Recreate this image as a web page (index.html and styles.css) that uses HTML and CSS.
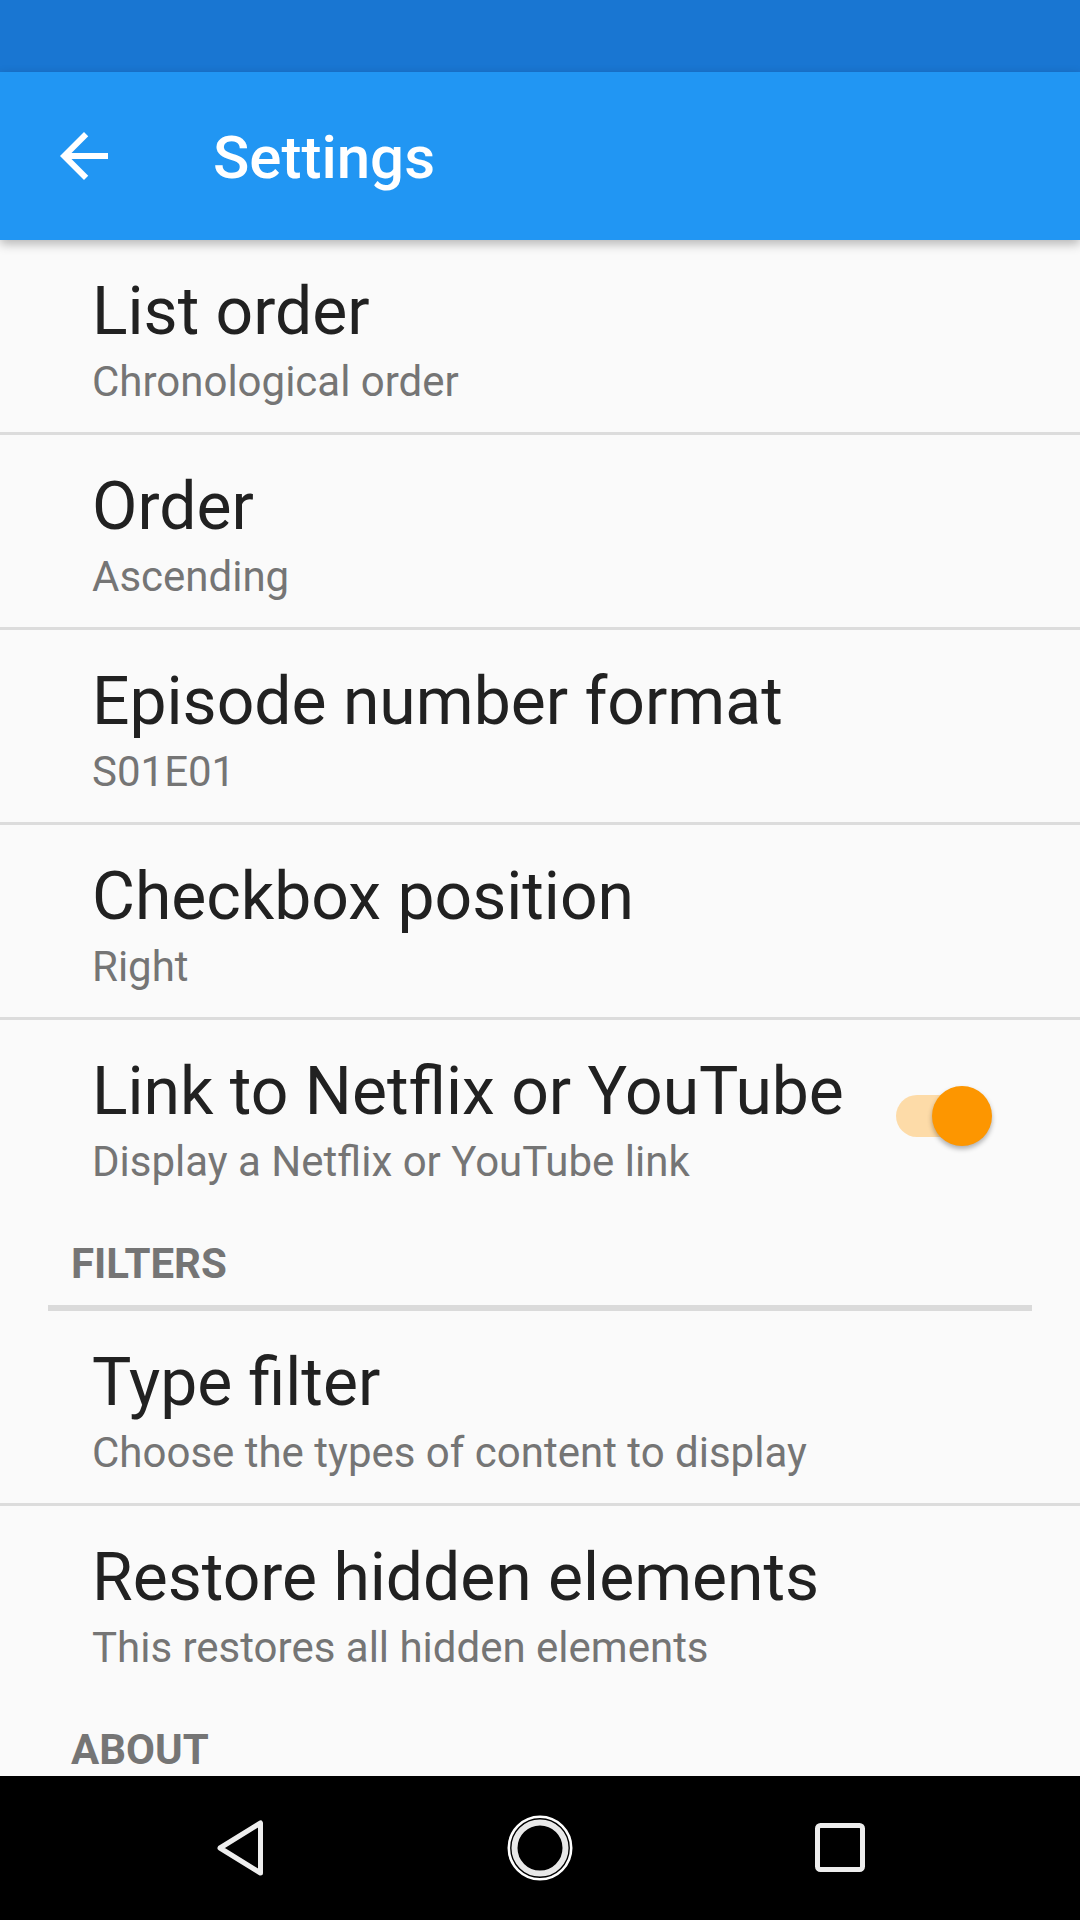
FILE: index.html
```html
<html>

<head>
    <link rel="stylesheet" href="styles.css">
</head>

<body>
    <div class="statusbar"></div>
    <div class="appbar">
        <svg class="backarrow" viewBox="0 0 24 24">
            <path d="M20 11H7.83l5.59-5.59L12 4l-8 8 8 8 1.41-1.41L7.83 13H20v-2z" fill="#ffffff"></path>
        </svg>
        <label class="apptitle">Settings</label>
    </div>
    <div class="content">
        <div class="pref">
            <div class="preftext">
                <div class="preftitle">List order</div>
                <div class="prefsummary">Chronological order</div>
            </div>
        </div>
        <div class="pref">
            <div class="preftext">
                <div class="preftitle">Order</div>
                <div class="prefsummary">Ascending</div>
            </div>
        </div>
        <div class="pref">
            <div class="preftext">
                <div class="preftitle">Episode number format</div>
                <div class="prefsummary">S01E01</div>
            </div>
        </div>
        <div class="pref">
            <div class="preftext">
                <div class="preftitle">Checkbox position</div>
                <div class="prefsummary">Right</div>
            </div>
        </div>
        <div class="pref last">
            <div class="preftext">
                <div class="preftitle">Link to Netflix or YouTube</div>
                <div class="prefsummary">Display a Netflix or YouTube link</div>
            </div>
            <div class="switch">
                <div class="track"></div>
                <div class="thumb"></div>
            </div>
        </div>

        <div class="category">FILTERS</div>
        <div class="catline"></div>
        <div class="pref">
            <div class="preftext">
                <div class="preftitle">Type filter</div>
                <div class="prefsummary">Choose the types of content to display</div>
            </div>
        </div>
        <div class="pref last">
            <div class="preftext">
                <div class="preftitle">Restore hidden elements</div>
                <div class="prefsummary">This restores all hidden elements</div>
            </div>
        </div>

        <div class="category">ABOUT</div>
    </div>
    <div class="navbar">
        <svg class="navicon" viewBox="0 0 72 72">
            <path d="M16 36 L56.5 11 L56.5 61 Z" fill="none" stroke="#eeeeee" stroke-width="5" stroke-linejoin="round"></path>
        </svg>
        <svg class="navicon" viewBox="0 0 72 72">
            <circle cx="36" cy="36" r="31.2" fill="none" stroke="#ffffff" stroke-width="2.6"></circle>
            <circle cx="36" cy="36" r="25.5" fill="none" stroke="#e8e8e8" stroke-width="6"></circle>
        </svg>
        <svg class="navicon" viewBox="0 0 72 72">
            <rect x="13.5" y="13.5" width="45" height="44" rx="3" fill="none" stroke="#eeeeee" stroke-width="5"></rect>
        </svg>
    </div>
</body>

</html>
```

FILE: styles.css
```css
body {
    margin: 0;
    width: 1080px;
    height: 1920px;
    display: flex;
    flex-direction: column;
    background-color: #fafafa;
    font-family: Roboto, "Noto Sans", sans-serif;
    overflow: hidden;
}

.statusbar {
    height: 72px;
    background-color: #1976d2;
}

.appbar {
    height: 168px;
    background-color: #2196f3;
    display: flex;
    align-items: center;
    padding-left: 48px;
    box-shadow: 0 4px 10px rgba(0, 0, 0, 0.28);
    position: relative;
    z-index: 2;
}

.backarrow {
    width: 72px;
    height: 72px;
}

.apptitle {
    margin-left: 93px;
    color: #ffffff;
    font-size: 60px;
    font-weight: 500;
    margin-top: 2px;
}

.content {
    flex: 1;
    overflow: hidden;
}

.pref {
    height: 192px;
    display: flex;
    align-items: flex-start;
    border-bottom: 3px solid #dcdcdc;
    padding-left: 92px;
}

.pref.last {
    border-bottom: none;
}

.preftext {
    flex: 1;
    padding-top: 32px;
}

.preftitle {
    font-size: 66px;
    line-height: 80px;
    color: #212121;
}

.prefsummary {
    font-size: 42px;
    line-height: 60px;
    color: #757575;
}

.switch {
    position: relative;
    width: 96px;
    height: 60px;
    margin-top: 66px;
    margin-right: 88px;
}

.track {
    position: absolute;
    left: 0;
    top: 9px;
    width: 87px;
    height: 42px;
    border-radius: 21px;
    background-color: #fddba8;
}

.thumb {
    position: absolute;
    right: 0;
    top: 0;
    width: 60px;
    height: 60px;
    border-radius: 50%;
    background-color: #fd9600;
    box-shadow: 0 3px 5px rgba(0, 0, 0, 0.3);
}

.category {
    box-sizing: border-box;
    height: 93px;
    padding-top: 27px;
    padding-left: 71px;
    font-size: 42px;
    line-height: 50px;
    font-weight: bold;
    color: #757575;
}

.catline {
    height: 6px;
    margin-left: 48px;
    margin-right: 48px;
    background-color: #dadada;
}

.navbar {
    height: 144px;
    background-color: #000000;
    display: flex;
    justify-content: center;
    align-items: center;
    gap: 228px;
}

.navicon {
    width: 72px;
    height: 72px;
}
```
